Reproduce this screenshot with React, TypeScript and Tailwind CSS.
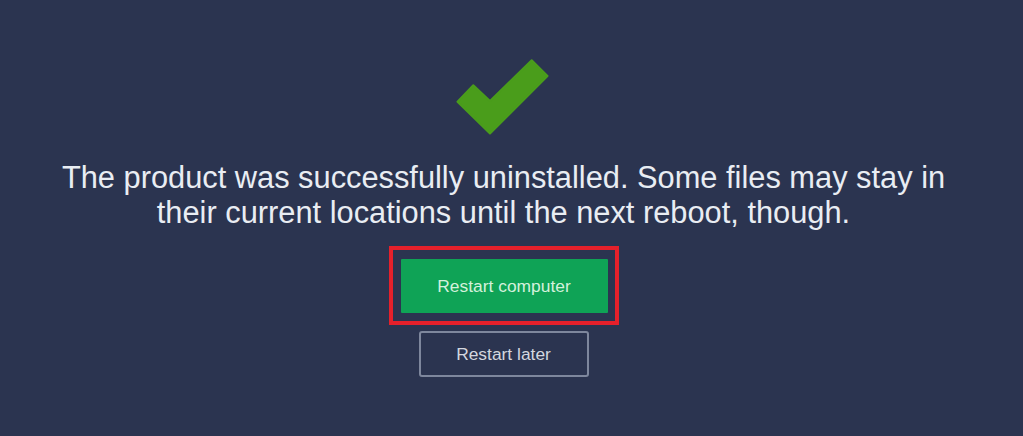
import React from "react";

export default function App() {
  return (
    <div
      className="w-[1023px] h-[436px] bg-[#2b3450] flex flex-col items-center pr-[16px] overflow-hidden"
      style={{ fontFamily: '"Liberation Sans", Arial, sans-serif' }}
    >
      <svg
        width="94"
        height="77"
        viewBox="0 0 94 77"
        className="mt-[59px] mr-[2px]"
      >
        <polygon
          points="1.5,42.7 17.3,26.3 34,42 75.7,1.3 91.5,17 34,74.5"
          fill="#4a9d1b"
          stroke="#4a9d1b"
          strokeWidth="2"
          strokeLinejoin="round"
        />
      </svg>
      <p className="mt-[24px] text-[30.8px] leading-[35px] text-[#e9edf3] text-center whitespace-nowrap">
        The product was successfully uninstalled. Some files may stay in
        <br />
        their current locations until the next reboot, though.
      </p>
      <div className="mt-[16px] border-[4px] border-[#e5202b] pt-[9px] pb-[8px] pl-[8px] pr-[7px]">
        <button className="w-[207px] h-[54px] bg-[#0fa356] text-[17.4px] text-[#d4f1dc] rounded-[1px]">
          Restart computer
        </button>
      </div>
      <button className="mt-[6px] w-[170px] h-[46px] border-2 border-[#7e879d] rounded-[3px] text-[17.4px] text-[#d3d7df]">
        Restart later
      </button>
    </div>
  );
}
